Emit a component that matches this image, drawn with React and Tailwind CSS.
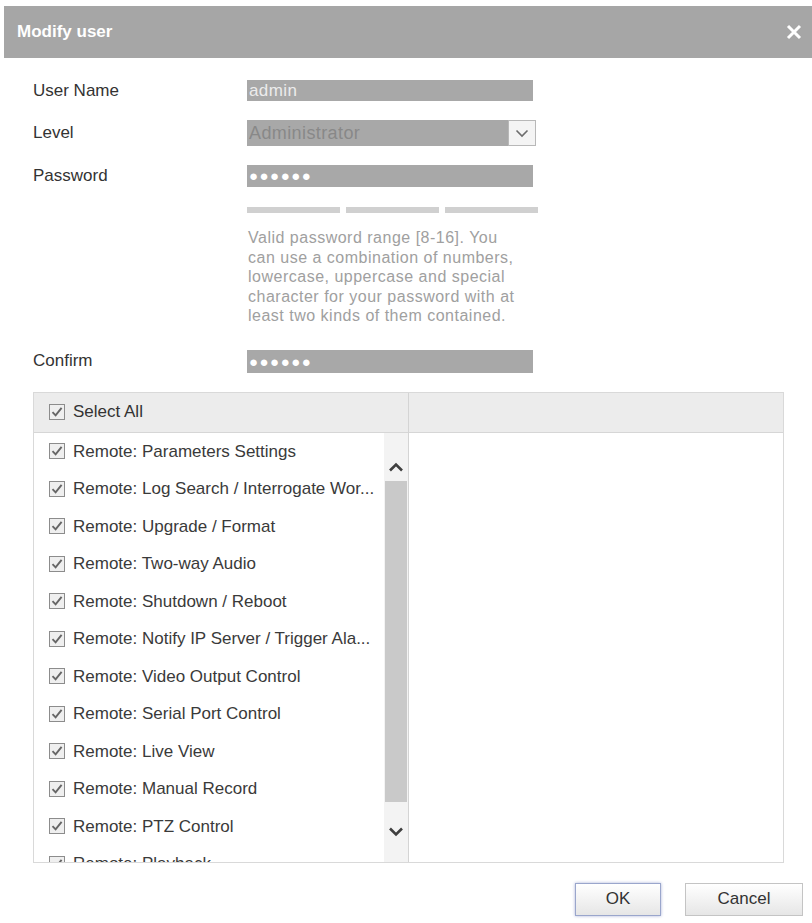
import React from 'react';

const font = { fontFamily: '"Liberation Sans", Arial, sans-serif' };

const items = [
	'Remote: Parameters Settings',
	'Remote: Log Search / Interrogate Wor...',
	'Remote: Upgrade / Format',
	'Remote: Two-way Audio',
	'Remote: Shutdown / Reboot',
	'Remote: Notify IP Server / Trigger Ala...',
	'Remote: Video Output Control',
	'Remote: Serial Port Control',
	'Remote: Live View',
	'Remote: Manual Record',
	'Remote: PTZ Control',
	'Remote: Playback'
];

const CheckBox = () => (
	<svg width="16" height="16" viewBox="0 0 16 16" className="shrink-0">
		<rect x="0.5" y="0.5" width="15" height="15" fill="#efefef" stroke="#8c8c8c" />
		<path d="M3.5 8.2 L6.6 11.4 L12.6 3.8" fill="none" stroke="#666" strokeWidth="1.9" />
	</svg>
);

const Chevron = ({ up, className }) => (
	<svg width="16" height="10" viewBox="0 0 16 10" className={className}>
		<path
			d={up ? 'M2 8.5 L8 2.5 L14 8.5' : 'M2 1.5 L8 7.5 L14 1.5'}
			fill="none"
			stroke="#3f3f3f"
			strokeWidth="2.6"
		/>
	</svg>
);

const Row = ({ label, children, className }) => (
	<div className={`flex items-center ${className}`}>
		<div className="w-[214px] text-[17px] text-[#333]">{label}</div>
		{children}
	</div>
);

const App = () => {
	return (
		<div className="w-[812px] h-[923px] bg-white overflow-hidden" style={font}>
			<div className="mt-[6px] ml-[4px] h-[52px] bg-[#a6a6a6] flex items-center justify-between pl-[13px] pr-[10px]">
				<span className="text-white font-bold text-[17px]">Modify user</span>
				<svg width="16" height="16" viewBox="0 0 16 16">
					<path d="M2 2 L14 14 M14 2 L2 14" stroke="#fff" strokeWidth="3" />
				</svg>
			</div>

			<div className="pl-[33px]">
				<Row label="User Name" className="mt-[22px] h-[21px]">
					<div className="w-[286px] h-[21px] bg-[#a8a8a8] text-[#ececec] text-[17px] leading-[21px] px-[2px] tracking-[0.4px]">
						admin
					</div>
				</Row>
				<Row label="Level" className="mt-[19px] h-[26px]">
					<div className="flex h-[26px]">
						<div className="w-[261px] h-[26px] bg-[#a8a8a8] text-[#888] text-[18px] leading-[26px] px-[2px] tracking-[0.4px]">
							Administrator
						</div>
						<div className="w-[28px] h-[26px] bg-[#f4f4f4] border border-[#b8b8b8] flex items-center justify-center">
							<svg width="14" height="9" viewBox="0 0 14 9">
								<path d="M1.5 1.5 L7 7 L12.5 1.5" fill="none" stroke="#6c6c6c" strokeWidth="1.6" />
							</svg>
						</div>
					</div>
				</Row>
				<Row label="Password" className="mt-[19px] h-[22px]">
					<div className="w-[286px] h-[22px] bg-[#a8a8a8] text-white text-[15px] leading-[22px] px-[2px] tracking-[1.5px]">
						●●●●●●
					</div>
				</Row>
				<div className="ml-[214px] mt-[20px] flex gap-[6px] h-[6px] w-[291px]">
					<div className="flex-1 bg-[#d0d0d0]" />
					<div className="flex-1 bg-[#d0d0d0]" />
					<div className="flex-1 bg-[#d0d0d0]" />
				</div>
				<div className="ml-[215px] mt-[15px] text-[16px] leading-[19.5px] text-[#a0a0a0] tracking-[0.5px]">
					Valid password range [8-16]. You
					<br />
					can use a combination of numbers,
					<br />
					lowercase, uppercase and special
					<br />
					character for your password with at
					<br />
					least two kinds of them contained.
				</div>
				<Row label="Confirm" className="mt-[24px] h-[23px]">
					<div className="w-[286px] h-[23px] bg-[#a8a8a8] text-white text-[15px] leading-[23px] px-[2px] tracking-[1.5px]">
						●●●●●●
					</div>
				</Row>
			</div>

			<div className="ml-[33px] mt-[19px] w-[751px] h-[471px] border border-[#d9d9d9] flex">
				<div className="w-[375px] border-r border-[#d4d4d4] flex flex-col">
					<div className="h-[40px] bg-[#ececec] border-b border-[#d6d6d6] flex items-center pl-[15px] gap-[8px] shrink-0">
						<CheckBox />
						<span className="text-[17px] text-[#333]">Select All</span>
					</div>
					<div className="flex flex-1 overflow-hidden">
						<div className="flex-1 overflow-hidden">
							{items.map(item => (
								<div key={item} className="h-[37.5px] flex items-center pl-[15px] gap-[8px]">
									<CheckBox />
									<span className="text-[17px] text-[#3a3a3a] whitespace-nowrap">{item}</span>
								</div>
							))}
						</div>
						<div className="w-[24px] bg-[#f3f3f3] flex flex-col">
							<div className="h-[48px] flex items-end justify-center pb-[9px]">
								<Chevron up />
							</div>
							<div className="h-[321px] mx-[1px] bg-[#c9c9c9]" />
							<div className="flex-1 flex items-center justify-center">
								<Chevron />
							</div>
						</div>
					</div>
				</div>
				<div className="flex-1 flex flex-col">
					<div className="h-[40px] bg-[#ececec] border-b border-[#d6d6d6] shrink-0" />
				</div>
			</div>

			<div className="mt-[20px] flex justify-end gap-[24px] pr-[9px]">
				<button className="w-[86px] h-[33px] border border-[#9aa6cc] shadow-[0_0_3px_#aab4d8] bg-gradient-to-b from-white to-[#e6e6e6] text-[17px] text-[#333]">
					OK
				</button>
				<button className="w-[118px] h-[33px] border border-[#c4c4c4] bg-gradient-to-b from-white to-[#e6e6e6] text-[17px] text-[#333]">
					Cancel
				</button>
			</div>
		</div>
	);
};

export default App;
